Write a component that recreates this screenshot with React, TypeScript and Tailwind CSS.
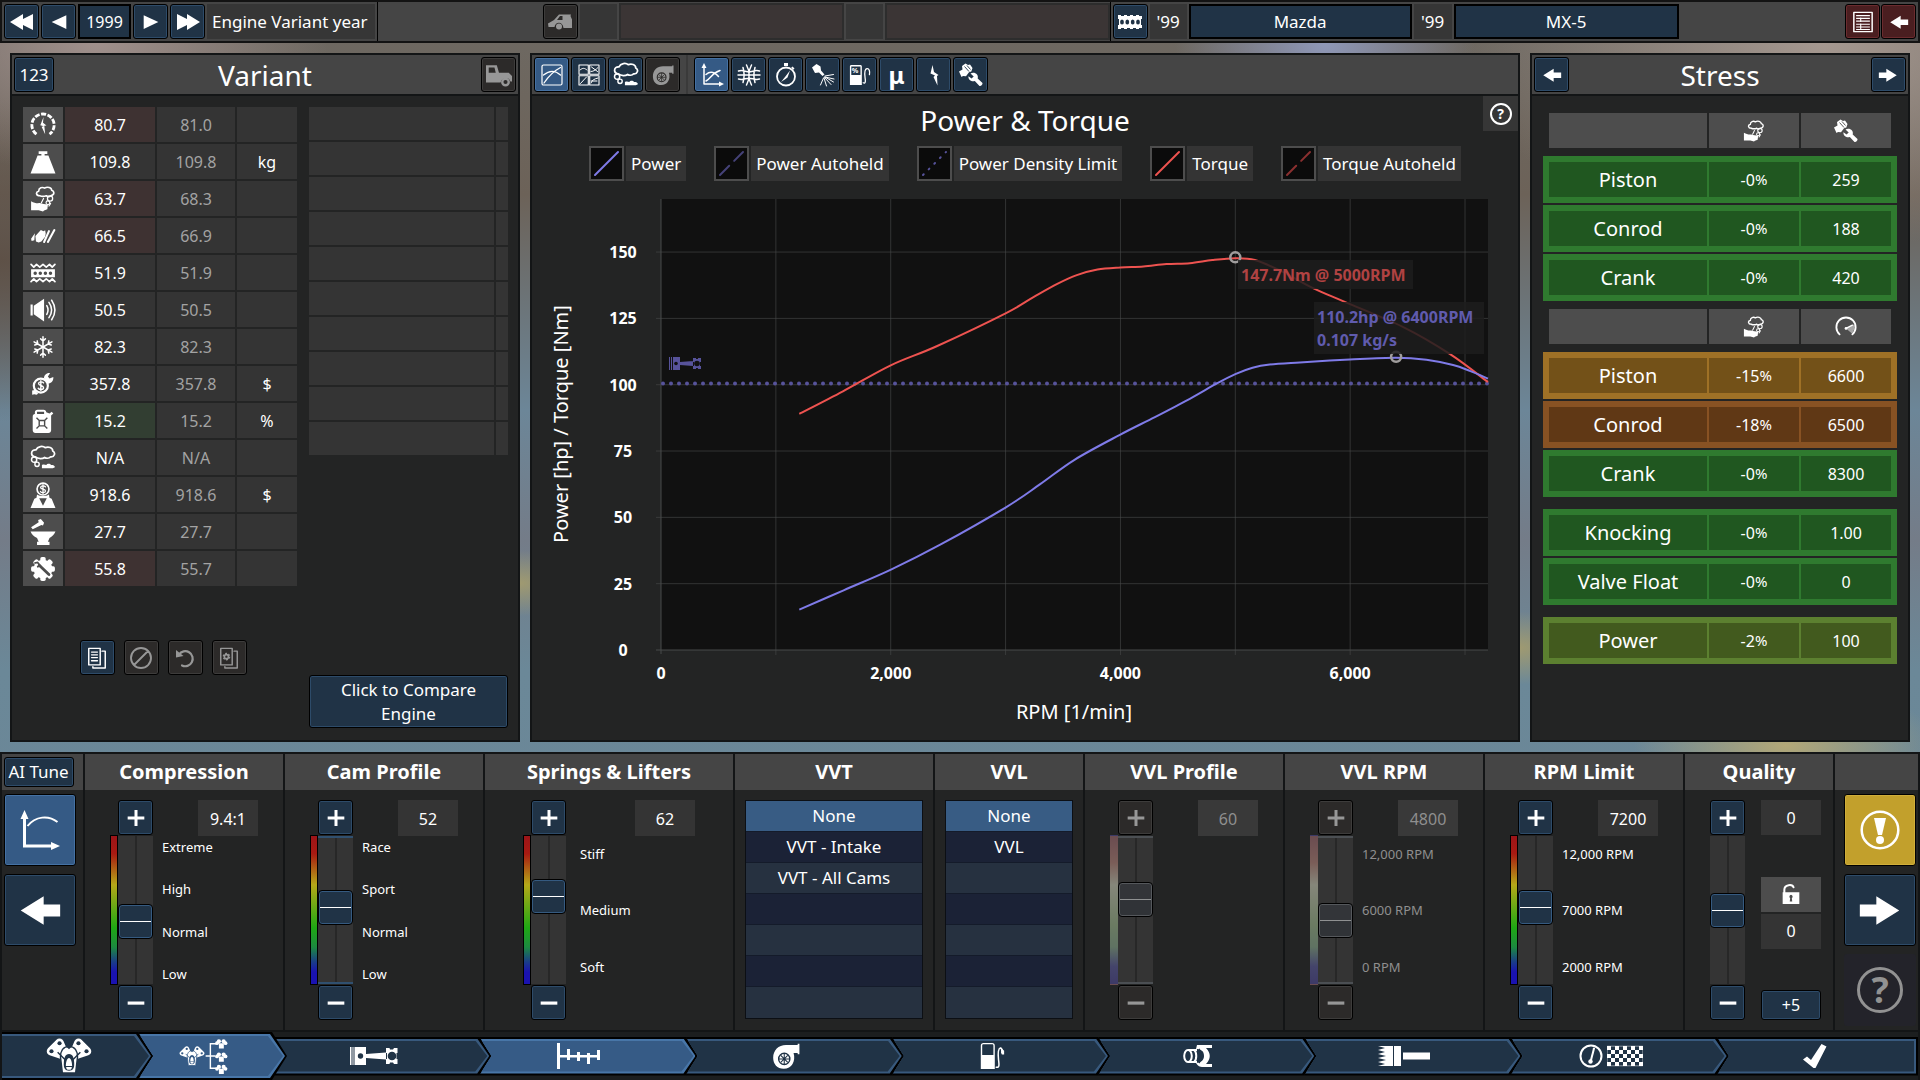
import React, { useState } from 'react';
import clsx from 'clsx';

type IconProps = { className?: string; hole?: string };

type SvgProps = {
  className?: string;
  box?: string;
  children: React.ReactNode;
};

const Svg = ({ className = 'size-6', box = '0 0 24 24', children }: SvgProps) => (
  <svg viewBox={box} className={clsx('shrink-0', className)} fill="currentColor" aria-hidden="true">
    {children}
  </svg>
);

const line = {
  fill: 'none',
  stroke: 'currentColor',
  strokeWidth: 1.6,
  strokeLinecap: 'round' as const,
  strokeLinejoin: 'round' as const,
};

/* ---------- icons: arrows and plain controls ---------- */

const TriangleLeft = ({ className }: IconProps) => (
  <Svg className={className}>
    <path d="M20 4.500v15L4 12z" />
  </Svg>
);

const TriangleRight = ({ className }: IconProps) => (
  <Svg className={className}>
    <path d="M4 4.500v15L20 12z" />
  </Svg>
);

const DoubleLeft = ({ className }: IconProps) => (
  <Svg className={className}>
    <path d="M13 4v5l10-5v16l-10-5v5L0 12z" />
  </Svg>
);

const DoubleRight = ({ className }: IconProps) => (
  <Svg className={className}>
    <path d="M11 4v5L1 4v16l10-5v5l13-8z" />
  </Svg>
);

const ArrowLeft = ({ className }: IconProps) => (
  <Svg className={className}>
    <path d="M14 4.500V9h9v6.500h-9v4.500L1.500 12.300z" />
  </Svg>
);

const ArrowRight = ({ className }: IconProps) => (
  <Svg className={className}>
    <path d="M10 4.500V9H1v6.500h9v4.500l12.500-7.700z" />
  </Svg>
);

const Plus = ({ className }: IconProps) => (
  <Svg className={className}>
    <path d="M10.200 2.500h3.600v7.700H22v3.600h-8.200v7.700h-3.600v-7.700H2v-3.600h8.200z" />
  </Svg>
);

const Minus = ({ className }: IconProps) => (
  <Svg className={className}>
    <path d="M2 10.200h20V14H2z" />
  </Svg>
);

/* ---------- icons: statistics column ---------- */

const GaugeBolt = ({ className }: IconProps) => (
  <Svg className={className}>
    <path d="M6 20.500A10.300 10.300 0 1 1 18 20.500" {...line} strokeLinecap="butt" strokeWidth="2.600" strokeDasharray="4.600 1.400" />
    <path d="M12.500 4.500L9.500 12.200l3.200 1-2 .3 3.300 7-.8-7.800 2-.2-3.200-2.500z" />
  </Svg>
);

const Weight = ({ className }: IconProps) => (
  <Svg className={className}>
    <path d="M8 2h8v2.500h-2.500V6h3.500L23.500 22.500H.5L7 6h3.500V4.500H8z" />
  </Svg>
);

const Environment = ({ className }: IconProps) => (
  <Svg className={className}>
    <path d="M9 9C5.500 9 5 5.500 8 4.800 8 1.500 11.500 .8 13.500 2 16 .3 20 1.500 20 4c3 1 2.500 4.500-.5 4.800C18 10 16 9.800 15 9c-2 .8-4 .8-6 0z" {...line} strokeWidth="1.500" />
    <circle cx="18.500" cy="11.500" r="2.400" {...line} strokeWidth="1.200" />
    <circle cx="16.500" cy="15.500" r="1.700" {...line} strokeWidth="1.100" />
    <path d="M12.500 11.500l-2 4M19 16l-1.500 2.500" {...line} strokeWidth="1.100" />
    <path d="M1 14c3 1.500 5 2.200 8 1.800 2.500.8 5 .8 7.500 1.700l-.5 4-3 1-1 1-4-1.200H1z" />
  </Svg>
);

const Responsiveness = ({ className }: IconProps) => (
  <Svg className={className}>
    <path d="M5 12l5-5.500 2.500 1 1.500-.8.500 3-.5 3-3.500 4.300L8 18l-2.500-1zM1 14.500l3.500-5L4 16l-2.500.5zM11 17.500L15.500 11" />
    <path d="M17.500 7.500L13 17.500M22.500 6.500l-6 11" {...line} strokeWidth="1.900" />
  </Svg>
);

const Vibration = ({ className }: IconProps) => (
  <Svg className={className}>
    <path d="M1 4L3.500 6.500 6 4l3 2.500L12 4l3 2.500L18 4l2.500 2.500L23 4M1 20l2.500-2.500L6 20l3-2.500 3 2.500 3-2.500 3 2.500 2.500-2.500L23 20" {...line} />
    <path fillRule="evenodd" d="M1 8.500h22V16H1zM3.200 12.200a1.600 1.600 0 1 0 3.200 0 1.600 1.600 0 1 0-3.200 0m4.700 0a1.600 1.600 0 1 0 3.200 0 1.600 1.600 0 1 0-3.200 0m4.700 0a1.600 1.600 0 1 0 3.200 0 1.600 1.600 0 1 0-3.200 0m4.700 0a1.600 1.600 0 1 0 3.200 0 1.600 1.600 0 1 0-3.200 0" />
  </Svg>
);

const Loudness = ({ className }: IconProps) => (
  <Svg className={className}>
    <path d="M.5 7h2v10h-2zM3.500 8L13 1.500v21L3.500 16z" />
    <path d="M15.500 8c1.500 2.600 1.500 5.400 0 8M17.500 5c3 4.300 3 9.700 0 14M20 3c4 6 4 12 0 18" {...line} strokeWidth="1.400" />
  </Svg>
);

const Cooling = ({ className }: IconProps) => (
  <Svg className={className}>
    {[0, 60, 120, 180, 240, 300].map((angle) => (
      <path
        key={angle}
        transform={`rotate(${angle} 12 12)`}
        d="M12 12V2.500M12 6.500L9.800 4.500M12 6.500L14.200 4.500"
        {...line}
        strokeWidth="1.400"
      />
    ))}
  </Svg>
);

const ServiceCost = ({ className }: IconProps) => (
  <Svg className={className}>
    <circle cx="10" cy="13.500" r="6.500" {...line} strokeWidth="2" />
    <path d="M12.500 11c-1-1.500-4.600-1.300-4.600.6 0 2.200 4.600 1.400 4.600 3.800 0 2-3.700 2.200-4.900.5M10 9v9" {...line} strokeWidth="1.300" />
    <path d="M13 7C12.500 4 15.500 1.500 18.500 2L16.500 5l1.500 2L21.500 5.500c.5 3.500-2 6-5 6zM2 18l2.500-.5 3 3.500-1.500 1-2-.5L2 22z" />
  </Svg>
);

const Jerrycan = ({ className }: IconProps) => (
  <Svg className={className}>
    <path
      fillRule="evenodd"
      d="M4.500 5.500V4C4.500 2.500 5.500 1.500 7 1.500h5.500C14 1.500 15 2.500 15 4l3 1L20 3.500 21.500 5 19.500 7v13.500c0 1.500-1 2.500-2.500 2.500H5C3.500 23 2.500 22 2.500 20.500V8c0-1.500.8-2.500 2-2.500M6.500 3.500v2h6.500v-2z"
    />
    <path d="M8.500 11.500h5v5h-5zM6 9l2.500 2.500M16 9l-2.500 2.500M6 19l2.500-2.500M16 19l-2.500-2.500" fill="none" stroke="#4d4d4d" strokeWidth="1.300" />
  </Svg>
);

const Emissions = ({ className }: IconProps) => (
  <Svg className={className}>
    <path d="M5 11C0 10.500 .5 4 5.500 4.500 7 1 12 .5 14 2.500c3-1.500 7 0 7 3 3 1.500 1.500 6-2 5.500-1.500 1.500-4 1.500-5.500.5-2 1.500-6 1.500-8.500-.5" {...line} />
    <circle cx="3.800" cy="13.500" r="2.400" {...line} strokeWidth="1.400" />
    <circle cx="6.500" cy="17.800" r="2" {...line} strokeWidth="1.300" />
    <path d="M11 18.500c2-1 3 0 4 0 1-1.500 3.500-1.500 4.500 0 2 0 3.500.5 3.500 2l-2 1H11z" />
  </Svg>
);

const Buyer = ({ className }: IconProps) => (
  <Svg className={className}>
    <circle cx="12" cy="6.500" r="5.500" {...line} strokeWidth="1.500" />
    <path d="M14.300 4.500c-1-1.400-4.500-1.200-4.500.5 0 2 4.500 1.300 4.500 3.400 0 1.800-3.500 2-4.600.4M12 2.500v8" {...line} strokeWidth="1.200" />
    <path fillRule="evenodd" d="M6.500 11.500c3 2 8 2 11 0l.5 3 2 1 3.500 8.500H.5L4 15.500l2-1zM8.500 15l3.500 7 3.500-7z" />
  </Svg>
);

const Anvil = ({ className }: IconProps) => (
  <Svg className={className}>
    <path d="M.5 11.500h23c-1 2.500-3 4.500-5.500 6l-1.500 3.500h1.500v3H6.500v-3H8L6.500 17.500c-3-1.500-5-3.500-6-6M1 7.500l7-4.500-.5-2L10 0l3 3.500-1 2.500-1.500-.5-8 4z" />
  </Svg>
);

const GearWrench = ({ className }: IconProps) => (
  <Svg className={className}>
    {[0, 45, 90, 135].map((angle) => (
      <rect key={angle} x="9.500" y="1" width="5" height="22" rx="1.500" transform={`rotate(${angle} 12 12)`} />
    ))}
    <circle cx="12" cy="12" r="8.600" />
    <path d="M8.500 8.500l9 8.500" stroke="#4d4d4d" strokeWidth="2.600" strokeLinecap="round" />
    <path d="M4 6.500l3-.5 2.500 3L6.500 10" fill="none" stroke="#4d4d4d" strokeWidth="1.600" />
  </Svg>
);

/* ---------- icons: toolbars ---------- */

const CarSide = ({ className }: IconProps) => (
  <Svg className={className}>
    <path fillRule="evenodd" d="M0 13.500L6 10l5-5.500h12l-.5 1.500L24 9.500V18h-8.500c-1-7-8-6.500-9-1H.5zM9 10h5.500V6H12z" />
    <circle cx="11" cy="16.500" r="3" />
  </Svg>
);

const CarFront = ({ className }: IconProps) => (
  <Svg className={className}>
    <path fillRule="evenodd" d="M0 3h10l2 7h9l3 3v5h-1.500c-1-4.500-8-4.500-9 1H0zm2.500 2v5H9L7.800 5z" />
    <circle cx="18" cy="18.500" r="3" {...line} strokeWidth="2.200" />
  </Svg>
);

const EngineBlock = ({ className, hole = '#203346' }: IconProps) => (
  <Svg className={className}>
    <path d="M0 5h3v1h3V5h3v1h3V5h3v1h3V5h3v1h3v3h-1v6h1v3h-3v1h-3v-1h-3v1h-3v-1H9v1H6v-1H3v1H0v-4h1V9H0z" />
    {[4, 9.300, 14.700, 20].map((cx) => (
      <ellipse key={cx} cx={cx} cy="12" rx="1.900" ry="2.500" fill={hole} />
    ))}
  </Svg>
);

const CurveBox = ({ className }: IconProps) => (
  <Svg className={className}>
    <rect x="2" y="2" width="20" height="20" rx="1.500" {...line} strokeWidth="1.200" />
    <path d="M4 20C8 14 12 9 20.500 4.500M3.500 12c6-5 12-4.500 17 0" {...line} strokeWidth="1.300" />
  </Svg>
);

const QuadBox = ({ className }: IconProps) => (
  <Svg className={className}>
    <path d="M2 2h9.300v9.300H2zM12.700 2H22v9.300h-9.300zM2 12.700h9.300V22H2zM12.700 12.700H22V22h-9.300z" {...line} strokeWidth="1.100" />
    <path d="M3 7c3-2.500 4.500-2 7 0M14.500 4l6 4.500M14 8.500c3 0 5-2 7-4M3.500 20.500l6-6.500M14 20c1-3 3-4 7-5M14 18h6" {...line} strokeWidth="1" />
  </Svg>
);

const Turbo = ({ className, hole = '#2c2a29' }: IconProps) => (
  <Svg className={className}>
    <path d="M22 1.500h1.500v9H22V9.500h-3.500c2 7-1.500 13.500-8.500 13.500C4.500 23 1 19 1 13.500 1 7 5.500 2.500 12 2.500h10z" />
    <circle cx="10.500" cy="14.500" r="4.800" fill="none" stroke={hole} strokeWidth="1.200" />
    <path d="M10.500 10v9M6 14.500h9M7.500 11.500l6 6M13.500 11.500l-6 6" stroke={hole} strokeWidth=".9" />
  </Svg>
);

const AxesCurve = ({ className }: IconProps) => (
  <Svg className={className}>
    <path d="M4 4v17h16M6 18C10 16 12 10 20 7.500M6 11.500c4-3.500 8.500-2.500 12.500 2" {...line} strokeWidth="1.500" />
    <path d="M1.500 5L4 0l2.500 5zM19 18.500l5 2.500-5 2.500z" />
  </Svg>
);

const AxesSingle = ({ className }: IconProps) => (
  <Svg className={className} box="0 0 40 40">
    <path d="M4.500 7v29H32" fill="none" stroke="currentColor" strokeWidth="3" />
    <path d="M7.500 16c8-10 21-11 30-4" fill="none" stroke="currentColor" strokeWidth="2" />
    <path d="M.5 9l4-9 4 9zM31 32l9 4-9 4z" />
  </Svg>
);

const Harmonics = ({ className }: IconProps) => (
  <Svg className={className}>
    <path d="M1 12h22M1.500 8c4-1.500 7 .8 10.500.8S18.500 6.500 22.500 8M1.500 16c4 1.500 7-.8 10.500-.8s6.500 2.300 10.500.8M9.500 2c3.500 6.500 3.500 13.500 0 20M14.500 2c-3.500 6.500-3.500 13.500 0 20M6 4.500c1.500 5 1.500 10 0 15M18 4.500c-1.500 5-1.500 10 0 15" {...line} strokeWidth="1.500" />
  </Svg>
);

const Stopwatch = ({ className }: IconProps) => (
  <Svg className={className}>
    <circle cx="12" cy="13.500" r="9" {...line} strokeWidth="1.800" />
    <path d="M10 0h4v3h-4zM18.500 3.500l2 2-1.300 1.300-2-2zM16 7.500l-2.500 7-2 1.500L7 19l4-5z" />
  </Svg>
);

const Injector = ({ className }: IconProps) => (
  <Svg className={className}>
    <path d="M1 4.500L5.500 1l4 2.500.5 4 3.500 4-2 1.500-3.500-3.500-4 .5z" />
    <path d="M14 13l8.500-1.500M14 14l9 2M13.500 14.500l6.500 7M13 15l2.500 8M12.500 15L9.500 22M14 14l8.500 5" {...line} strokeWidth="1" />
  </Svg>
);

const PumpPercent = ({ className }: IconProps) => (
  <Svg className={className}>
    <path fillRule="evenodd" d="M1 2.500C1 1.500 2 1 3 1h9c1 0 2 .5 2 1.500V23H1zm1.500.3V12h10V2.800z" />
    <text x="3" y="10" className="text-[8px] font-bold">%</text>
    <path d="M15.500 20.500c3 1.500 2.500-3 2-6-.5-4-.3-9 2-9.500 2.500-.5 3.500 3 2.800 6.500" {...line} strokeWidth="1.400" />
  </Svg>
);

const Pump = ({ className }: IconProps) => (
  <Svg className={className} box="0 0 26 30">
    <path fillRule="evenodd" d="M1 4c0-2 1-3 3-3h9c2 0 3 1 3 3v25H1zm1.500 10h12V4c0-1-.5-1.500-1.500-1.500H4C3 2.500 2.500 3 2.500 4z" />
    <path d="M17.500 27c4 1 3-4 2.500-8-.5-5-.5-12 2-12.500 2 0 2 3 1.500 5" {...line} />
    <path d="M22 5.500l4 4v4h-2.500z" />
  </Svg>
);

const Bolt = ({ className }: IconProps) => (
  <Svg className={className}>
    <path d="M10.500 2L8.500 10.500l4.500 2L11.500 14l4 8.500-.5-9.500 1.500-1-4.500-3z" />
  </Svg>
);

const PistonWrench = ({ className, hole = '#203346' }: IconProps) => (
  <Svg className={className}>
    <path d="M0 8.500L3.500 6.500 3 3l3.500-2.500L9 2l2-.5L13.500 5l-1.200 3.500-2.300.8-3 4-3-.3-1.500 1z" />
    <path d="M11.500 10.500c2-1.500 5-1 6.500 1 1 1.300 1 2.700.7 4l4.800 4.500c.3 1.500-1.500 3.500-3 3l-4.700-5c-2 .7-4.300 0-5.500-1.500-.8-1-1-2.200-.8-3.200l3 2.200 2.200-2z" />
    <path d="M5.500 3.500l4.500 5M8 2.500l3.500 4" stroke={hole} strokeWidth=".9" />
  </Svg>
);

const Spec = ({ className }: IconProps) => (
  <Svg className={className}>
    <path d="M2 1.500h20v21H2z" {...line} strokeWidth="1.600" />
    <path d="M4.500 5h15M4.500 8h15M4.500 11h15M4.500 14.500h15M4.500 17.500h15M4.500 20.200h15M9.500 7v5M9.500 13.500v7" {...line} strokeLinecap="butt" strokeWidth="1.200" />
  </Svg>
);

const RevLimit = ({ className }: IconProps) => (
  <Svg className={className}>
    <path d="M5 20A10.500 10.500 0 1 1 19 20" {...line} strokeWidth="2" />
    <path d="M12 13.500l9-4.500c1 3 0 7-2.500 10z" opacity=".5" />
    <path d="M12 13.500L19 10" {...line} />
    <circle cx="12" cy="13.500" r="1.500" />
  </Svg>
);

/* ---------- icons: preset row ---------- */

const Copy = ({ className }: IconProps) => (
  <Svg className={className}>
    <path d="M3 1.500h12.500v18H3zM17.500 4.500h3.500V23H7.500v-1.500" {...line} />
    <path d="M6 5.500h6.500M6 8.500h6.500M6 11.500h6.500M6 15h6.500" {...line} strokeWidth="1.400" />
  </Svg>
);

const CopyGear = ({ className }: IconProps) => (
  <Svg className={className}>
    <path d="M3 1.500h12.500v18H3zM17.500 4.500h3.500V23H7.500v-1.500" {...line} />
    <circle cx="9.200" cy="10.500" r="3.300" fill="none" stroke="currentColor" strokeWidth="1.800" strokeDasharray="2 1.455" />
    <circle cx="9.200" cy="10.500" r="2.200" fill="none" stroke="currentColor" strokeWidth="1.800" />
  </Svg>
);

const Forbidden = ({ className }: IconProps) => (
  <Svg className={className}>
    <path d="M5 19L19 5M22 12a10 10 0 1 1-20 0 10 10 0 0 1 20 0z" {...line} strokeWidth="1.900" />
  </Svg>
);

const Undo = ({ className }: IconProps) => (
  <Svg className={className}>
    <path d="M6 8.500A7.500 7.500 0 1 1 9 19.500" {...line} strokeWidth="2.200" />
    <path d="M3 4v7.500l7.500-1.500z" />
  </Svg>
);

/* ---------- icons: bottom navigation ---------- */

const EngineFamily = ({ className = 'h-9 w-12', hole = '#203346' }: IconProps) => (
  <Svg className={className} box="0 0 48 38">
    <path d="M14 5L5 14l15 5zM34 5l9 9-15 5z" stroke="currentColor" strokeWidth="9" strokeLinejoin="round" />
    <path d="M24 9c7 0 9 6 9 11l-2 17H17l-2-17c0-5 2-11 9-11" stroke={hole} strokeWidth="1.500" />
    <path d="M21 0h6v9l-3 3-3-3z" fill={hole} />
    <g fill={hole}>
      <circle cx="14" cy="5.500" r="2.200" />
      <circle cx="5.500" cy="14" r="2.200" />
      <circle cx="34" cy="5.500" r="2.200" />
      <circle cx="42.500" cy="14" r="2.200" />
      <path d="M24 17c4 0 5.500 4 5.500 11 0 4-1.500 6.500-5.500 6.500s-5.500-2.500-5.500-6.500c0-7 1.500-11 5.500-11" />
      <path d="M12 15l9 9M36 15l-9 9" stroke={hole} strokeWidth="1.500" />
    </g>
    <path d="M24 21c2 0 3.300 4 3.300 8.500h-6.600C20.700 25 22 21 24 21M21 30.500h6c0 2-1 3-3 3s-3-1-3-3" />
  </Svg>
);

const VariantTree = () => (
  <span className="flex items-center">
    <EngineFamily className="h-5 w-7" hole="#355a85" />
    <Svg className="-ml-px h-9 w-6" box="0 0 24 38">
      <path d="M0 19h10M11 6H5v26h6" fill="none" stroke="currentColor" strokeWidth="1.500" />
      {[1, 15, 28].map((y) => (
        <g key={y} transform={`translate(10 ${y})`}>
          <circle cx="4" cy="2.500" r="2.200" />
          <circle cx="9" cy="2.500" r="2.200" />
          <circle cx="2" cy="4.500" r="2" />
          <circle cx="11" cy="4.500" r="2" />
          <path d="M4 4.500h5.200v5.500H4z" />
        </g>
      ))}
    </Svg>
  </span>
);

const Conrod = ({ className = 'h-[18px] w-12', hole = '#203346' }: IconProps) => (
  <Svg className={className} box="0 0 48 18">
    <path d="M0 0h1.500v18H0zM2.500 0h1v18h-1zM4.500 0H16v18H4.500zM16 7l20-1.500v7L16 11z" />
    <circle cx="10.500" cy="9" r="2.700" fill={hole} />
    <path d="M36 1h3.500l.5 1.500h3L44 1h3.500v5h-1v6h1v5H44l-1-1.500h-3l-.5 1.500H36v-5h1V6h-1z" />
    <circle cx="42" cy="9" r="4.300" fill={hole} />
  </Svg>
);

const Camshaft = () => (
  <Svg className="h-7 w-11" box="0 0 44 26">
    <path d="M0 0h3v26H0zM3 12h40v2.500H3zM10 6h3v11h-3zM20 9h3v9h-3zM30 10h3v11h-3zM40 7h3v10h-3z" />
  </Svg>
);

const Exhaust = () => (
  <Svg className="h-6 w-8" box="0 0 30 24">
    <ellipse cx="5" cy="12" rx="3.800" ry="6" fill="none" stroke="currentColor" strokeWidth="2" />
    <path d="M5 6h9M5 18h9M11 6c3 2 3 10 0 12" fill="none" stroke="currentColor" strokeWidth="2" />
    <path d="M14 1h15v3h-6c5 5 5 11 0 16h6v3H19c-2 0-4-1-6-4 5 0 8-3 8-7 0-5-3-7-8-7z" />
    <path d="M16 5c3 4 3 10 0 14" fill="none" stroke="#203346" strokeWidth="1.500" />
  </Svg>
);

const Muffler = () => (
  <Svg className="h-5 w-13" box="0 0 52 20">
    <path d="M0 0h15v20H0l7-2-7-2 8-2-8-2 8-2-8-2 7-2-7-2 7-2zM16 0h7v20h-7zM25 6.500h27v7H25z" />
  </Svg>
);

const TestFlag = () => (
  <span className="flex items-center gap-1">
    <Svg className="size-6">
      <circle cx="12" cy="12" r="10.500" {...line} strokeWidth="2" />
      <path d="M15 4.500L12 16" {...line} strokeWidth="2" />
      <circle cx="11.500" cy="17.500" r="2.200" />
    </Svg>
    <Svg className="h-[22px] w-9" box="0 0 9 5">
      {Array.from({ length: 45 }, (_, i) => i)
        .filter((i) => i % 2 === 0)
        .map((i) => (
          <rect key={i} x={i % 9} y={Math.floor(i / 9)} width="1" height="1" />
        ))}
      <path d="M.05 .05h8.900v4.900H.05z" fill="none" stroke="currentColor" strokeWidth=".12" />
    </Svg>
  </span>
);

const Check = () => (
  <Svg className="size-6">
    <path d="M0 15.500l4-3 4 3.500L18.500 0l5 2.500L12.500 24h-2z" />
  </Svg>
);

const OpenLock = () => (
  <Svg className="size-5">
    <path d="M4 11V7C4 0 14 0 15 4" {...line} strokeWidth="2.400" />
    <path fillRule="evenodd" d="M2 10h20v14H2zm10 3a2.200 2.200 0 0 0-1 4l-.5 4h3l-.5-4a2.200 2.200 0 0 0-1-4" />
  </Svg>
);

/* ---------- shared controls ---------- */

type Tone = 'blue' | 'active' | 'off' | 'red' | 'gold';

const tones: Record<Tone, string> = {
  blue: 'bg-[#203346] text-white inset-ring-[#2d4b69]',
  active: 'bg-[#355a85] text-white inset-ring-[#4471a3]',
  off: 'bg-[#2c2a29] text-[#979797] inset-ring-[#3d3c3b]',
  red: 'bg-[#4a1e20] text-white inset-ring-[#6b2b2e]',
  gold: 'bg-[#c2a02c] text-white inset-ring-[#d0ae3a]',
};

type ButtonProps = {
  label?: string;
  tone?: Tone;
  className?: string;
  onClick?: () => void;
  children: React.ReactNode;
};

const Button = ({ label, tone = 'blue', className = 'size-[35px]', onClick, children }: ButtonProps) => (
  <button
    type="button"
    aria-label={label}
    disabled={tone === 'off'}
    onClick={onClick}
    className={clsx('flex shrink-0 items-center justify-center rounded-[3px] border border-black inset-ring', tones[tone], className)}
  >
    {children}
  </button>
);

const Panel = ({ className, children }: { className?: string; children: React.ReactNode }) => (
  <section className={clsx('flex flex-col border-2 border-[#131516] bg-[#232424]', className)}>{children}</section>
);

const panelHeader = 'flex items-center border-b-2 border-[#131516] bg-[#454545] px-0.5 h-[41px]';

/* ---------- top bar ---------- */

const TopBar = () => {
  const [year, setYear] = useState(1999);
  const [maker, setMaker] = useState('Mazda');
  const [model, setModel] = useState('MX-5');
  const field = 'h-[35px] min-w-0 border-2 border-black bg-[#203346] text-center';

  return (
    <header className="flex border-2 border-[#131313] bg-[#454545] text-[17px]">
      <div className="flex items-center gap-0.5 border-r border-black p-0.5">
        <Button label="Back ten years" onClick={() => setYear(year - 10)}>
          <DoubleLeft />
        </Button>
        <Button label="Back one year" onClick={() => setYear(year - 1)}>
          <TriangleLeft className="size-5.5" />
        </Button>
        <input
          aria-label="Engine Variant year"
          value={year}
          onChange={(e) => setYear(Number(e.target.value) || 0)}
          className={clsx(field, 'w-[53px] text-base')}
        />
        <Button label="Forward one year" onClick={() => setYear(year + 1)}>
          <TriangleRight className="size-5.5" />
        </Button>
        <Button label="Forward ten years" onClick={() => setYear(year + 10)}>
          <DoubleRight />
        </Button>
        <span className="flex h-[35px] w-[168px] items-center bg-[#363636] pl-[5px]">Engine Variant year</span>
      </div>
      <div className="flex flex-[734] items-center justify-end gap-0.5 border-r border-black">
        <Button label="Car" tone="off">
          <CarSide />
        </Button>
        <span className="h-[35px] w-[37px] bg-[#363636]" />
        <span className="h-[37px] w-[225px] border-2 border-[#2d2d2d] bg-[#3b3535]" />
        <span className="h-[35px] w-[37px] bg-[#363636]" />
        <span className="h-[37px] w-[225px] border-2 border-[#2d2d2d] bg-[#3b3535]" />
      </div>
      <div className="flex flex-[806] items-center gap-0.5 p-0.5">
        <Button label="Engine">
          <EngineBlock />
        </Button>
        <span className="flex h-[35px] w-[37px] items-center justify-center bg-[#363636]">'99</span>
        <input aria-label="Model family" value={maker} onChange={(e) => setMaker(e.target.value)} className={clsx(field, 'w-[223px]')} />
        <span className="flex h-[35px] w-[38px] items-center justify-center bg-[#363636]">'99</span>
        <input aria-label="Model name" value={model} onChange={(e) => setModel(e.target.value)} className={clsx(field, 'w-[225px]')} />
        <div className="ml-auto flex gap-px">
          <Button label="Spec sheet" tone="red">
            <Spec className="size-5.5" />
          </Button>
          <Button label="Leave" tone="red">
            <ArrowLeft className="size-5" />
          </Button>
        </div>
      </div>
    </header>
  );
};

/* ---------- variant statistics ---------- */

type Stat = {
  name: string;
  icon: (props: IconProps) => React.ReactNode;
  value: string;
  previous: string;
  unit?: string;
  trend?: 'worse' | 'better';
};

const stats: Stat[] = [
  { name: 'Performance', icon: GaugeBolt, value: '80.7', previous: '81.0', trend: 'worse' },
  { name: 'Weight', icon: Weight, value: '109.8', previous: '109.8', unit: 'kg' },
  { name: 'Environmental resistance', icon: Environment, value: '63.7', previous: '68.3', trend: 'worse' },
  { name: 'Responsiveness', icon: Responsiveness, value: '66.5', previous: '66.9', trend: 'worse' },
  { name: 'Smoothness', icon: Vibration, value: '51.9', previous: '51.9' },
  { name: 'Loudness', icon: Loudness, value: '50.5', previous: '50.5' },
  { name: 'Cooling', icon: Cooling, value: '82.3', previous: '82.3' },
  { name: 'Service costs', icon: ServiceCost, value: '357.8', previous: '357.8', unit: '$' },
  { name: 'Fuel efficiency', icon: Jerrycan, value: '15.2', previous: '15.2', unit: '%', trend: 'better' },
  { name: 'Emissions', icon: Emissions, value: 'N/A', previous: 'N/A' },
  { name: 'Material costs', icon: Buyer, value: '918.6', previous: '918.6', unit: '$' },
  { name: 'Production units', icon: Anvil, value: '27.7', previous: '27.7' },
  { name: 'Engineering time', icon: GearWrench, value: '55.8', previous: '55.7', trend: 'worse' },
];

const VariantPanel = () => (
  <Panel className="w-[510px] shrink-0">
    <div className={panelHeader}>
      <div className="flex flex-1">
        <Button label="Number format" className="h-[35px] w-10 text-[17px]">
          123
        </Button>
      </div>
      <h2 className="text-[28px]">Variant</h2>
      <div className="flex flex-1 justify-end">
        <Button label="Car view" tone="off">
          <CarFront className="size-6.5" />
        </Button>
      </div>
    </div>
    <div className="flex flex-1 gap-2 pt-[9px] pr-2 pb-3 pl-[9px]">
      <div>
        <table className="border-separate border-spacing-0.5 text-center">
          <tbody>
            {stats.map(({ name, icon: StatIcon, value, previous, unit, trend }) => (
              <tr key={name}>
                <th aria-label={name} className="h-[35px] w-10 bg-[#4d4d4d] p-0">
                  <StatIcon className="mx-auto size-6.5" />
                </th>
                <td
                  className={clsx(
                    'w-[90px] p-0',
                    trend === 'worse' && 'bg-[#3e3232]',
                    trend === 'better' && 'bg-[#323e32]',
                    !trend && 'bg-[#343434]',
                  )}
                >
                  {value}
                </td>
                <td className="w-[78px] bg-[#343434] p-0 text-[#a3a3a3]">{previous}</td>
                <td className="w-15 bg-[#343434] p-0">{unit}</td>
              </tr>
            ))}
          </tbody>
        </table>
        <div className="mt-13 flex justify-center gap-[9px] pl-1.5">
          <Button label="Copy tune">
            <Copy className="size-5.5" />
          </Button>
          <Button label="Clear" tone="off">
            <Forbidden />
          </Button>
          <Button label="Revert" tone="off">
            <Undo />
          </Button>
          <Button label="Paste settings" tone="off">
            <CopyGear className="size-5.5" />
          </Button>
        </div>
      </div>
      <div className="flex flex-1 flex-col">
        <table className="w-full border-separate border-spacing-0.5">
          <tbody>
            {Array.from({ length: 10 }, (_, i) => (
              <tr key={i}>
                <td className="h-[33px] bg-[#343434] p-0" />
                <td className="w-3 bg-[#343434] p-0" />
              </tr>
            ))}
          </tbody>
        </table>
        <Button className="mx-0.5 mt-auto h-[53px] px-4 text-[17px] leading-6">Click to Compare Engine</Button>
      </div>
    </div>
  </Panel>
);

/* ---------- power & torque graph ---------- */

type Point = [rpm: number, value: number];

const torque: Point[] = [
  [1204, 89], [1584, 97.5], [2000, 107.3], [2400, 114.5], [3000, 126.9], [3250, 133.2], [3450, 138],
  [3620, 141.3], [3800, 143.4], [4000, 144.2], [4200, 144.6], [4400, 145.5], [4604, 145.8], [4800, 147],
  [5000, 147.7], [5170, 147], [5400, 142.8], [5677, 136.4], [5953, 131.2], [6458, 121.8], [6867, 111.6], [7200, 101],
];

const power: Point[] = [
  [1204, 15.2], [1590, 22.5], [2002, 30.3], [2431, 39.7], [3003, 53.8], [3301, 62.5], [3600, 71.7],
  [3995, 81.1], [4300, 87.8], [4604, 94.7], [4836, 100.4], [5000, 104], [5150, 106.4], [5300, 107.6],
  [5561, 108.4], [5997, 109.5], [6400, 110.2], [6664, 109.4], [6896, 107.4], [7041, 105.2], [7200, 102.3],
];

const plot = { left: 129, right: 956, top: 14, bottom: 465 };
const toX = (rpm: number) => plot.left + (rpm * (plot.right - plot.left)) / 7200;
const toY = (value: number) => plot.bottom - (value * (plot.bottom - plot.top)) / 170;

// Catmull-Rom spline through all points, written as cubic beziers
const curve = (points: Point[]) => {
  const p = points.map(([rpm, value]) => [toX(rpm), toY(value)]);
  return p.reduce((d, [x, y], i) => {
    if (i === 0) return `M${x} ${y}`;
    const before = p[i - 2] ?? p[i - 1];
    const prev = p[i - 1];
    const next = p[i + 1] ?? p[i];
    const c1 = [prev[0] + (x - before[0]) / 6, prev[1] + (y - before[1]) / 6];
    const c2 = [x - (next[0] - prev[0]) / 6, y - (next[1] - prev[1]) / 6];
    return `${d}C${c1[0]} ${c1[1]} ${c2[0]} ${c2[1]} ${x} ${y}`;
  }, '');
};

const legend = [
  { name: 'Power', color: '#7f7be8', dash: undefined },
  { name: 'Power Autoheld', color: '#454278', dash: '13 7' },
  { name: 'Power Density Limit', color: '#57539b', dash: '1 7' },
  { name: 'Torque', color: '#ee5350', dash: undefined },
  { name: 'Torque Autoheld', color: '#8a3030', dash: '13 7' },
];

const Graph = () => (
  <svg viewBox="0 0 986 553" className="mt-1 w-full" role="img" aria-label="Power and torque over RPM">
    <rect x={plot.left} y={plot.top} width={plot.right - plot.left} height={plot.bottom - plot.top} fill="#111111" />
    <g stroke="#4a4b4b" strokeOpacity=".6">
      {[25, 50, 75, 100, 125, 150].map((v) => (
        <path key={v} d={`M${plot.left - 5} ${toY(v)}H${plot.right}`} />
      ))}
      {[1, 2, 3, 4, 5, 6, 7].map((k) => (
        <path key={k} d={`M${toX(k * 1000)} ${plot.top}V${plot.bottom + 5}`} />
      ))}
    </g>
    <path d={`M${plot.left} ${plot.top}V${plot.bottom + 4}M${plot.left - 5} ${plot.bottom}H${plot.right}`} stroke="#484a4a" />
    <path
      d={`M${plot.left + 2} ${toY(100.5)}H${plot.right}`}
      stroke="#57539b"
      strokeWidth="4"
      strokeLinecap="round"
      strokeDasharray="0 8"
    />
    <path d={curve(torque)} fill="none" stroke="#ee5350" strokeWidth="2" />
    <path d={curve(power)} fill="none" stroke="#7f7be8" strokeWidth="2" />

    {/* bore limit marker above the density line */}
    <g transform="translate(137 172)" fill="#57539b">
      <path d="M0 0h1v13H0zM2 0h1v13H2zM4 0h7v13H4zM11 5l13-1v5l-13-1zM24 1h3v1h2V1h3v4h-1v4h1v3h-3v-1h-2v1h-3V9h1V5h-1z" />
      <circle cx="7" cy="6.500" r="1.800" fill="#111111" />
      <circle cx="28" cy="6.500" r="2.800" fill="#111111" />
    </g>

    <g fill="none" stroke="#a09d9d" strokeWidth="2.500">
      <circle cx={toX(5000)} cy={toY(148)} r="5" />
      <circle cx={toX(6400)} cy={toY(110.5)} r="5" />
    </g>
    <rect x="706" y="75" width="175" height="29" fill="#1d1d1d" fillOpacity=".85" />
    <rect x="782" y="117" width="170" height="52" fill="#1d1d1d" fillOpacity=".85" />
    <g className="text-base font-bold">
      <text x="709" y="96" fill="#b04242">147.7Nm @ 5000RPM</text>
      <text x="785" y="138" fill="#605bae">110.2hp @ 6400RPM</text>
      <text x="785" y="161" fill="#605bae">0.107 kg/s</text>
    </g>

    <g className="fill-white text-base font-bold" textAnchor="middle">
      {[0, 25, 50, 75, 100, 125, 150].map((v) => (
        <text key={v} x="91" y={toY(v) + 6}>{v}</text>
      ))}
      {[0, 2000, 4000, 6000].map((rpm) => (
        <text key={rpm} x={toX(rpm)} y="494">{rpm.toLocaleString('en-US')}</text>
      ))}
    </g>
    <g className="fill-white text-xl" textAnchor="middle">
      <text x="542" y="534">RPM [1/min]</text>
      <text transform="translate(36 239) rotate(-90)">Power [hp] / Torque [Nm]</text>
    </g>
  </svg>
);

const graphModes: [string, Tone, React.ReactNode][] = [
  ['Single graph', 'active', <CurveBox />],
  ['Graph grid', 'blue', <QuadBox />],
  ['Emissions', 'blue', <Emissions className="size-6.5" />],
  ['Turbo', 'off', <Turbo className="size-5.5" />],
];

const graphKinds: [string, Tone, React.ReactNode][] = [
  ['Power and torque', 'active', <AxesCurve />],
  ['Airflow', 'blue', <Harmonics className="size-6" />],
  ['Response time', 'blue', <Stopwatch className="size-6" />],
  ['Fuel mixture', 'blue', <Injector />],
  ['Fuel economy', 'blue', <PumpPercent className="size-5.5" />],
  ['Friction', 'blue', <span className="text-2xl leading-none font-bold">μ</span>],
  ['Ignition', 'blue', <Bolt />],
  ['Reliability', 'blue', <PistonWrench />],
];

const GraphPanel = () => (
  <Panel className="min-w-0 flex-1">
    <div className={clsx(panelHeader, 'gap-0.5')}>
      {graphModes.map(([label, tone, icon]) => (
        <Button key={label} label={label} tone={tone}>
          {icon}
        </Button>
      ))}
      <span className="mx-1 h-full w-0.5 bg-[#3a3a3a]" />
      {graphKinds.map(([label, tone, icon]) => (
        <Button key={label} label={label} tone={tone}>
          {icon}
        </Button>
      ))}
    </div>
    <div className="relative mb-0.5 flex h-12 items-center justify-center">
      <h2 className="text-[28px]">Power &amp; Torque</h2>
      <button
        type="button"
        aria-label="Graph help"
        className="absolute top-0 right-0 flex size-[35px] items-center justify-center bg-[#363636]"
      >
        <span className="flex size-[22px] items-center justify-center rounded-full border-2 border-white text-sm font-bold">?</span>
      </button>
    </div>
    <ul className="flex justify-center gap-7 text-[17px]">
      {legend.map(({ name, color, dash }) => (
        <li key={name} className="flex gap-0.5">
          <svg viewBox="0 0 35 35" className="size-[35px] bg-[#0b0b0b]" aria-hidden="true">
            <path d="M1 1h33v33H1z" fill="none" stroke="#4d4d4d" strokeWidth="2" />
            <path d="M6 29L29 6" stroke={color} strokeWidth="2" strokeLinecap="round" strokeDasharray={dash} />
          </svg>
          <span className="flex items-center bg-[#343434] px-[5px]">{name}</span>
        </li>
      ))}
    </ul>
    <Graph />
  </Panel>
);

/* ---------- stress ---------- */

type Severity = 'good' | 'fair' | 'warn' | 'bad';

const severities: Record<Severity, { row: string; cell: string }> = {
  good: { row: 'bg-[#2f7a2f]', cell: 'bg-[#205720]' },
  fair: { row: 'bg-[#5c8030]', cell: 'bg-[#425a1e]' },
  warn: { row: 'bg-[#9f7126]', cell: 'bg-[#735118]' },
  bad: { row: 'bg-[#885223]', cell: 'bg-[#603815]' },
};

type StressRowProps = {
  name: string;
  penalty: number;
  limit: string;
  severity?: Severity;
  spaced?: boolean;
};

const stressGrid = 'grid grid-cols-[158fr_90fr_90fr] gap-0.5 px-1.5 text-center';

const StressHead = ({ first, children }: { first?: boolean; children: React.ReactNode }) => (
  <tr className={clsx(stressGrid, 'mb-1.5', !first && 'mt-1.5')}>
    <th aria-label="Part" className="h-[35px] bg-[#4d4d4d]" />
    <th aria-label="Reliability penalty" className="flex items-center justify-center bg-[#4d4d4d]">
      <Environment className="size-5.5" />
    </th>
    <th aria-label="Limit" className="flex items-center justify-center bg-[#4d4d4d]">
      {children}
    </th>
  </tr>
);

const StressRow = ({ name, penalty, limit, severity = 'good', spaced }: StressRowProps) => {
  const { row, cell } = severities[severity];
  const box = clsx('flex h-[35px] items-center justify-center', cell);
  return (
    <tr className={clsx(stressGrid, 'py-1.5', row, spaced && 'mt-2.5')}>
      <th className={clsx(box, 'text-xl font-normal')}>{name}</th>
      <td className={box}>
        -{penalty}
        <span className="text-[15px]">%</span>
      </td>
      <td className={box}>{limit}</td>
    </tr>
  );
};

const StressPanel = () => (
  <Panel className="w-[380px] shrink-0">
    <div className={clsx(panelHeader, 'justify-between')}>
      <Button label="Previous page">
        <ArrowLeft className="size-5" />
      </Button>
      <h2 className="text-[28px]">Stress</h2>
      <Button label="Next page">
        <ArrowRight className="size-5" />
      </Button>
    </div>
    <table className="block px-[11px] pt-[17px]">
      <tbody className="flex flex-col gap-0.5">
        <StressHead first>
          <PistonWrench className="size-6" hole="#4d4d4d" />
        </StressHead>
        <StressRow name="Piston" penalty={0} limit="259" />
        <StressRow name="Conrod" penalty={0} limit="188" />
        <StressRow name="Crank" penalty={0} limit="420" />
        <StressHead>
          <RevLimit className="size-5.5" />
        </StressHead>
        <StressRow name="Piston" penalty={15} limit="6600" severity="warn" />
        <StressRow name="Conrod" penalty={18} limit="6500" severity="bad" />
        <StressRow name="Crank" penalty={0} limit="8300" />
        <StressRow name="Knocking" penalty={0} limit="1.00" spaced />
        <StressRow name="Valve Float" penalty={0} limit="0" />
        <StressRow name="Power" penalty={2} limit="100" severity="fair" spaced />
      </tbody>
    </table>
  </Panel>
);

/* ---------- tuning strip ---------- */

const Column = ({ title, children }: { title?: React.ReactNode; children: React.ReactNode }) => (
  <div className="flex min-w-0 flex-col bg-[#232424]">
    <h3 className="flex h-9 items-center justify-center bg-[#454545] text-xl font-bold whitespace-nowrap">{title}</h3>
    {children}
  </div>
);

type SliderProps = {
  label: string;
  min: number;
  max: number;
  step?: number;
  value: number;
  onChange: (value: number) => void;
  disabled?: boolean;
  bounded?: boolean;
};

const Slider = ({ label, min, max, step = 1, value, onChange, disabled, bounded }: SliderProps) => {
  const nudge = (by: number) => onChange(Math.min(max, Math.max(min, value + by)));
  const tone = disabled ? 'off' : 'blue';
  return (
    <div className="flex flex-col gap-px">
      <Button label={`Increase ${label}`} tone={tone} onClick={() => nudge(step)}>
        <Plus className="size-5" />
      </Button>
      <input
        type="range"
        aria-label={label}
        min={min}
        max={max}
        step={step}
        value={value}
        disabled={disabled}
        onChange={(e) => onChange(Number(e.target.value))}
        className={clsx(
          'm-0 h-[148px] w-[35px] appearance-none bg-[linear-gradient(90deg,#343434_17px,#272727_17px,#272727_19px,#343434_19px)] [direction:rtl] [writing-mode:vertical-lr]',
          '[&::-webkit-slider-thumb]:size-[35px] [&::-webkit-slider-thumb]:appearance-none [&::-webkit-slider-thumb]:rounded [&::-webkit-slider-thumb]:border [&::-webkit-slider-thumb]:border-black',
          disabled
            ? '[&::-webkit-slider-thumb]:bg-[linear-gradient(#333539_16px,#8f9192_16px,#8f9192_17px,#303337_17px)] [&::-webkit-slider-thumb]:inset-ring [&::-webkit-slider-thumb]:inset-ring-[#55585c]'
            : '[&::-webkit-slider-thumb]:bg-[linear-gradient(#203346_16px,#ffffff_16px,#ffffff_17px,#203346_17px)] [&::-webkit-slider-thumb]:inset-ring [&::-webkit-slider-thumb]:inset-ring-[#355a80]',
          bounded && 'border-t-2 border-b-2',
          disabled ? 'border-[#4b4f53]' : 'border-[#30506f]',
        )}
      />
      <Button label={`Decrease ${label}`} tone={tone} onClick={() => nudge(-step)}>
        <Minus className="size-5" />
      </Button>
    </div>
  );
};

type SliderColumnProps = {
  title: string;
  min: number;
  max: number;
  initial: number;
  step?: number;
  marks?: string[];
  format?: (value: number) => string;
  disabled?: boolean;
  bounded?: boolean;
  wide?: boolean;
};

const SliderColumn = ({ title, initial, marks = [], format = String, wide, ...slider }: SliderColumnProps) => {
  const [value, setValue] = useState(initial);
  const { disabled } = slider;
  return (
    <Column title={title}>
      <div className={clsx('flex pt-2.5', wide ? 'px-[38px]' : 'px-[25px]')}>
        <span
          className={clsx(
            'mt-[35px] h-[150px] w-2 border',
            disabled
              ? 'border-transparent bg-[linear-gradient(#6b4c50,#7a5d58_18%,#85867a_33%,#6b7b62_60%,#5f7262_75%,#44446b_88%,#3d3a66)]'
              : 'border-black bg-[linear-gradient(#9c1418,#a81a12_12%,#b5a818_33%,#1fa814_62%,#1c8a40_75%,#1a3d88_85%,#1a12b0_92%)]',
          )}
        />
        <Slider label={title} value={value} onChange={setValue} {...slider} />
        <ul
          className={clsx(
            'mt-[26px] flex h-[170px] flex-1 flex-col justify-around text-[13px] whitespace-nowrap',
            wide ? 'pl-3.5' : 'pl-[9px]',
            disabled && 'text-[#8f8f8f]',
          )}
        >
          {marks.map((mark) => (
            <li key={mark}>{mark}</li>
          ))}
        </ul>
        <output
          className={clsx(
            '-ml-15 flex h-9 w-15 items-center justify-center pt-px',
            disabled ? 'bg-[#393939] text-[#8f8f8f]' : 'bg-[#343434]',
          )}
        >
          {format(value)}
        </output>
      </div>
    </Column>
  );
};

const OptionColumn = ({ title, options }: { title: string; options: string[] }) => {
  const [selected, setSelected] = useState(options[0]);
  return (
    <Column title={title}>
      <ul className="mx-2.5 mt-2.5 border border-[#0c0f14] text-[17px]">
        {Array.from({ length: 7 }, (_, i) => (
          <li key={i} className={clsx('h-[31px] border-b border-[#141b2a] last:border-b-0', i % 2 ? 'bg-[#1b2236]' : 'bg-[#263140]')}>
            {options[i] && (
              <button
                type="button"
                aria-pressed={options[i] === selected}
                onClick={() => setSelected(options[i])}
                className="size-full aria-pressed:bg-[#385c84]"
              >
                {options[i]}
              </button>
            )}
          </li>
        ))}
      </ul>
    </Column>
  );
};

const QualityColumn = () => {
  const [quality, setQuality] = useState(0);
  const box = 'flex h-[35px] items-center justify-center';
  return (
    <Column title="Quality">
      <div className="flex gap-4 px-[25px] pt-2.5">
        <Slider label="Quality" min={-15} max={15} value={quality} onChange={setQuality} />
        <div className="-mr-4 flex w-15 flex-col">
          <output className={clsx(box, 'bg-[#343434]')}>{quality}</output>
          <div className="my-auto flex flex-col gap-0.5">
            <button type="button" aria-label="Lock quality" className={clsx(box, 'bg-[#4d4d4d]')}>
              <OpenLock />
            </button>
            <span className={clsx(box, 'bg-[#343434]')}>0</span>
          </div>
          <Button className="h-[30px] w-full" onClick={() => setQuality(Math.min(15, quality + 5))}>
            +5
          </Button>
        </div>
      </div>
    </Column>
  );
};

const TuningStrip = () => (
  <section className="grid grid-cols-[81px_198fr_198fr_248fr_198fr_148fr_198fr_198fr_198fr_148fr_83px] gap-0.5 border-2 border-[#131516] bg-[#131516]">
    <Column
      title={
        <Button className="mr-2 h-[30px] w-[70px] text-[17px] font-normal">AI Tune</Button>
      }
    >
      <div className="flex flex-col gap-2 px-0.5 py-1">
        <Button label="Tune graph" tone="active" className="size-[72px]">
          <AxesSingle className="size-10" />
        </Button>
        <Button label="Previous step" className="size-[72px]">
          <ArrowLeft className="size-11" />
        </Button>
      </div>
    </Column>
    <SliderColumn
      title="Compression"
      min={7}
      max={13}
      step={0.1}
      initial={9.4}
      format={(v) => `${v.toFixed(1)}:1`}
      marks={['Extreme', 'High', 'Normal', 'Low']}
    />
    <SliderColumn title="Cam Profile" min={0} max={100} initial={52} marks={['Race', 'Sport', 'Normal', 'Low']} bounded />
    <SliderColumn title="Springs & Lifters" min={0} max={100} initial={62} marks={['Stiff', 'Medium', 'Soft']} wide />
    <OptionColumn title="VVT" options={['None', 'VVT - Intake', 'VVT - All Cams']} />
    <OptionColumn title="VVL" options={['None', 'VVL']} />
    <SliderColumn title="VVL Profile" min={0} max={100} initial={60} disabled bounded />
    <SliderColumn
      title="VVL RPM"
      min={0}
      max={12000}
      step={100}
      initial={4800}
      marks={['12,000 RPM', '6000 RPM', '0 RPM']}
      disabled
      bounded
    />
    <SliderColumn
      title="RPM Limit"
      min={2000}
      max={12000}
      step={100}
      initial={7200}
      marks={['12,000 RPM', '7000 RPM', '2000 RPM']}
    />
    <QualityColumn />
    <Column>
      <div className="flex flex-col items-end gap-2 px-0.5 py-1">
        <Button label="Warnings" tone="gold" className="size-[72px]">
          <Svg className="size-10" box="0 0 40 40">
            <circle cx="20" cy="20" r="18.300" fill="none" stroke="currentColor" strokeWidth="2.500" />
            <path d="M14 8h12l-4 17h-4z" />
            <circle cx="20" cy="30" r="4" />
          </Svg>
        </Button>
        <Button label="Next step" className="size-[72px]">
          <ArrowRight className="size-11" />
        </Button>
        <button type="button" aria-label="Help" className="flex size-[72px] items-center justify-center rounded-[3px] bg-[#23232a] text-[#929292]">
          <span className="flex size-[46px] items-center justify-center rounded-full border-3 border-[#929292] text-4xl font-bold">?</span>
        </button>
      </div>
    </Column>
  </section>
);

/* ---------- step navigation ---------- */

const arrowFirst = '[clip-path:polygon(0_0,calc(100%-15px)_0,100%_50%,calc(100%-15px)_100%,0_100%)]';
const arrowTall = '[clip-path:polygon(0_0,calc(100%-15px)_0,100%_50%,calc(100%-15px)_100%,0_100%,15px_50%)]';
const arrowStart = '[clip-path:polygon(0_0,calc(100%-12px)_0,100%_50%,calc(100%-12px)_100%,0_100%)]';
const arrowMid = '[clip-path:polygon(0_0,calc(100%-12px)_0,100%_50%,calc(100%-12px)_100%,0_100%,12px_50%)]';
const arrowLast = '[clip-path:polygon(0_0,100%_0,100%_100%,0_100%,12px_50%)]';

type StepProps = {
  label: string;
  shape: string;
  className: string;
  current?: boolean;
  children: React.ReactNode;
};

// Three nested copies of the arrow: black outline, light edge, face
const Step = ({ label, shape, className, current, children }: StepProps) => (
  <button type="button" aria-label={label} className={clsx('bg-black py-0.5 pr-0.5', shape, className)}>
    <span className={clsx('block size-full py-0.5 pr-0.5', current ? 'bg-[#4876a8]' : 'bg-[#38597d]', shape)}>
      <span
        className={clsx(
          'flex size-full items-center justify-center',
          current ? 'bg-[#365b86]' : 'bg-[#203346]',
          shape,
          shape !== arrowLast && 'pr-3.5',
        )}
      >
        {children}
      </span>
    </span>
  </button>
);

const StepBar = () => (
  <nav className="flex items-center border-x-2 border-[#131516] bg-[#1c1e1f]">
    <Step label="Engine family" shape={arrowFirst} className="relative z-10 h-12 w-[151px]">
      <EngineFamily />
    </Step>
    <Step label="Engine variant" shape={arrowTall} className="relative z-10 -ml-[15px] h-12 w-[149px]" current>
      <VariantTree />
    </Step>
    <Step label="Bottom end" shape={arrowStart} className="-ml-3 h-[39px] flex-[216]">
      <Conrod />
    </Step>
    <Step label="Top end" shape={arrowMid} className="-ml-3 h-[39px] flex-[218]" current>
      <Camshaft />
    </Step>
    <Step label="Aspiration" shape={arrowMid} className="-ml-3 h-[39px] flex-[218]">
      <Turbo className="size-7" hole="#203346" />
    </Step>
    <Step label="Fuel system" shape={arrowMid} className="-ml-3 h-[39px] flex-[218]">
      <Pump className="h-7 w-7" />
    </Step>
    <Step label="Headers" shape={arrowMid} className="-ml-3 h-[39px] flex-[218]">
      <Exhaust />
    </Step>
    <Step label="Exhaust" shape={arrowMid} className="-ml-3 h-[39px] flex-[218]">
      <Muffler />
    </Step>
    <Step label="Testing" shape={arrowMid} className="-ml-3 h-[39px] flex-[218]">
      <TestFlag />
    </Step>
    <Step label="Finish" shape={arrowLast} className="-ml-3 h-[39px] flex-[201]">
      <Check />
    </Step>
  </nav>
);

const backdrop =
  "bg-[radial-gradient(ellipse_at_5%_4%,#a0908c,transparent_9%),radial-gradient(ellipse_at_0%_24%,#5e5147,transparent_14%),radial-gradient(ellipse_at_27%_54%,#a09a70,transparent_4%),radial-gradient(ellipse_at_79%_60%,#a09a70,transparent_4%),radial-gradient(ellipse_at_93%_69%,#b3a878,transparent_6%),radial-gradient(ellipse_at_69%_4%,#8f98b8,transparent_8%),radial-gradient(ellipse_at_95%_4%,#a59890,transparent_14%),linear-gradient(#6e6a64,#6c6258_18%,#6c8698_38%,#747c88_50%,#6b8898_62%,#6a8496)]";

const App = () => (
  <div className={clsx("flex min-h-screen flex-col text-base text-white [font-family:'Noto_Sans',sans-serif]", backdrop)}>
    <TopBar />
    <main className="flex flex-1 gap-2.5 p-2.5">
      <VariantPanel />
      <GraphPanel />
      <StressPanel />
    </main>
    <TuningStrip />
    <StepBar />
  </div>
);

export default App;
